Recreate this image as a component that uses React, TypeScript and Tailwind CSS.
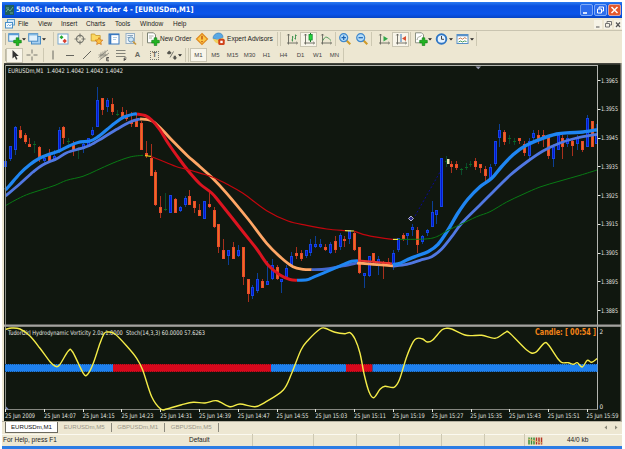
import type { ReactNode } from "react";
import clsx from "clsx";

type Point = [number, number];

// direction, high, body top, body bottom, low
type Candle = ["u" | "d" | "x", number, number, number, number];

const candles: Candle[] = [
  ["u", 158, 161, 167, 170],
  ["u", 146, 146, 159, 161],
  ["u", 126, 127, 150, 155],
  ["d", 126, 130, 138, 139],
  ["d", 133, 135, 142, 144],
  ["d", 138, 144, 147, 147],
  ["x", 141, 144, 145, 153],
  ["d", 146, 147, 158, 162],
  ["u", 157, 158, 161, 164],
  ["d", 149, 154, 162, 162],
  ["u", 150, 156, 161, 161],
  ["u", 127, 130, 152, 153],
  ["d", 126, 127, 138, 144],
  ["x", 138, 141, 142, 146],
  ["d", 141, 144, 151, 156],
  ["x", 147, 149, 150, 159],
  ["u", 141, 144, 149, 153],
  ["u", 138, 138, 147, 147],
  ["u", 127, 130, 135, 136],
  ["u", 87, 100, 127, 127],
  ["d", 98, 98, 110, 115],
  ["u", 98, 100, 107, 112],
  ["d", 98, 104, 112, 115],
  ["x", 110, 114, 115, 116],
  ["d", 107, 112, 119, 119],
  ["d", 110, 115, 119, 121],
  ["d", 112, 121, 124, 127],
  ["d", 115, 121, 127, 127],
  ["d", 121, 123, 150, 150],
  ["d", 141, 153, 156, 158],
  ["d", 144, 158, 176, 176],
  ["d", 170, 172, 205, 206],
  ["d", 196, 207, 213, 218],
  ["x", 193, 209, 210, 211],
  ["u", 195, 195, 213, 213],
  ["d", 198, 199, 213, 213],
  ["u", 206, 207, 211, 212],
  ["u", 196, 198, 205, 207],
  ["d", 190, 196, 205, 205],
  ["d", 201, 201, 208, 213],
  ["d", 204, 210, 216, 216],
  ["u", 201, 201, 219, 219],
  ["d", 192, 204, 207, 208],
  ["d", 207, 210, 227, 228],
  ["d", 224, 224, 247, 253],
  ["d", 239, 250, 259, 259],
  ["u", 250, 250, 256, 265],
  ["d", 242, 247, 259, 259],
  ["u", 245, 250, 256, 257],
  ["d", 247, 247, 277, 285],
  ["d", 279, 279, 294, 302],
  ["u", 285, 287, 296, 299],
  ["u", 273, 279, 291, 293],
  ["d", 279, 281, 288, 288],
  ["u", 261, 281, 285, 285],
  ["u", 259, 265, 279, 280],
  ["d", 265, 267, 279, 280],
  ["u", 279, 279, 282, 293],
  ["u", 265, 268, 277, 279],
  ["u", 252, 256, 265, 267],
  ["d", 247, 253, 256, 259],
  ["d", 250, 253, 259, 261],
  ["u", 250, 250, 256, 258],
  ["u", 239, 244, 253, 256],
  ["u", 236, 244, 247, 248],
  ["u", 239, 244, 247, 248],
  ["d", 244, 247, 250, 251],
  ["u", 242, 244, 253, 254],
  ["d", 236, 241, 250, 253],
  ["u", 233, 235, 247, 250],
  ["d", 236, 239, 241, 247],
  ["u", 230, 230, 239, 244],
  ["d", 231, 233, 250, 251],
  ["d", 247, 247, 273, 274],
  ["u", 273, 273, 276, 288],
  ["u", 256, 256, 276, 277],
  ["d", 253, 253, 261, 265],
  ["u", 256, 259, 265, 275],
  ["d", 261, 262, 266, 279],
  ["d", 258, 262, 265, 266],
  ["u", 250, 253, 267, 270],
  ["u", 238, 238, 250, 252],
  ["d", 233, 235, 239, 241],
  ["u", 233, 233, 236, 245],
  ["u", 224, 227, 230, 236],
  ["d", 227, 230, 245, 253],
  ["u", 235, 236, 242, 244],
  ["u", 229, 230, 233, 236],
  ["u", 201, 212, 227, 227],
  ["u", 210, 210, 215, 224],
  ["u", 158, 158, 207, 207],
  ["x", 156, 161, 162, 167],
  ["d", 161, 164, 167, 173],
  ["d", 161, 164, 168, 170],
  ["x", 168, 169, 170, 175],
  ["x", 163, 167, 168, 170],
  ["x", 161, 164, 165, 167],
  ["d", 158, 161, 167, 170],
  ["d", 164, 164, 168, 173],
  ["d", 166, 169, 176, 181],
  ["u", 164, 167, 178, 179],
  ["u", 141, 141, 164, 166],
  ["u", 124, 130, 138, 147],
  ["d", 130, 132, 142, 145],
  ["x", 135, 138, 139, 144],
  ["x", 138, 141, 142, 145],
  ["d", 138, 138, 141, 144],
  ["d", 141, 144, 153, 156],
  ["u", 138, 141, 156, 159],
  ["u", 130, 133, 138, 141],
  ["d", 130, 135, 139, 144],
  ["d", 130, 135, 139, 147],
  ["d", 135, 135, 156, 159],
  ["u", 144, 147, 159, 167],
  ["u", 135, 135, 150, 150],
  ["d", 135, 138, 147, 159],
  ["u", 135, 138, 144, 147],
  ["d", 138, 141, 146, 156],
  ["u", 135, 138, 144, 150],
  ["d", 141, 141, 150, 152],
  ["u", 115, 118, 147, 147],
  ["d", 121, 121, 147, 147],
  ["u", 124, 135, 144, 144],
];

const averages: { color: string; width: number; points: Point[] }[] = [
  // slow
  { color: "#5078e2", width: 2.8, points: [[5.5, 196], [20, 183.7], [33, 172], [43, 164.7], [56.7, 158.7], [66.7, 152.7], [80, 148.7], [90, 145.3], [103, 137.7], [116.7, 129.3], [130, 122], [140, 119]] },
  { color: "#ffa766", width: 2.8, points: [[140, 119], [151.7, 120.7], [161.7, 129.3], [173, 141.3], [186.7, 155], [200, 166.7], [211.7, 177.3], [226.7, 193.3], [248, 219], [266.7, 243.3], [281.7, 258.3], [293, 266.7], [303, 269.3], [311.7, 269.7]] },
  { color: "#4568cf", width: 2.8, points: [[311.7, 269.7], [326.7, 269], [343, 266], [357, 263]] },
  { color: "#ffa766", width: 2.8, points: [[357, 263], [373, 264.3], [393, 265.8]] },
  { color: "#5078e2", width: 2.8, points: [[393, 266], [406.7, 264.3], [420, 260.3], [431.7, 256.7], [441.7, 249], [451.7, 236.7], [461.7, 223.3], [480, 205], [493, 192], [510, 175.3], [526.7, 162], [543, 151], [560, 143], [576.7, 138], [597, 134.3]] },
  // fast
  { color: "#1f86f2", width: 3.2, points: [[5.5, 190], [10, 185], [20, 173.5], [30, 164.5], [40, 158], [50, 154], [59, 151], [68, 146.5], [78, 142.5], [90, 141], [97, 137.5], [107, 129.5], [115, 123], [123, 117.5], [133, 114.3], [137, 114]] },
  { color: "#dc1420", width: 3, points: [[137, 114], [145, 115.5], [151.7, 120], [160, 130], [168, 143], [180, 160], [190, 173], [200, 184], [211.7, 193], [220, 202.7], [243, 231.7], [256.7, 249], [268, 265], [280, 275], [290, 279.5], [297, 280.3]] },
  { color: "#1f86f2", width: 3, points: [[297, 280.3], [307, 279.8], [313, 277.3], [326.7, 271.7], [343, 264.7], [351.7, 261.3], [358, 260.8]] },
  { color: "#e83430", width: 2, points: [[358, 260.6], [373, 261.7], [392, 263.5]] },
  { color: "#1f86f2", width: 3.4, points: [[393, 264.5], [400, 263.3], [406.7, 260], [416.7, 256], [428, 251.7], [438, 244.3], [448, 230], [458, 213], [468, 199], [480, 186.7], [491.7, 178.3], [501.7, 166.5], [513, 154.7], [525, 146], [540, 139.3], [556.7, 134], [570, 132.7], [583, 132], [597, 129.7]] },
  // trend
  { color: "#087a14", width: 1, points: [[5.5, 205.7], [15, 200.3], [26.7, 194.7], [41.7, 189.7], [55, 185.3], [66.7, 180.3], [83, 176.3], [96.7, 170.3], [113, 163], [130, 157], [143, 155.3]] },
  { color: "#e8d81c", width: 1.2, points: [[145, 155.6], [151, 156.4]] },
  { color: "#c4060e", width: 1.2, points: [[151.7, 156.7], [166.7, 162.7], [176.7, 166.7], [193, 171], [211.7, 176.7], [226.7, 184], [243, 193.3], [266.7, 210.7], [288, 221], [306.7, 225.3], [326.7, 229], [345, 230.7]] },
  { color: "#f0e450", width: 1.2, points: [[345, 230.6], [354, 231]] },
  { color: "#c4060e", width: 1.2, points: [[354, 231], [363, 234.3], [380, 237.7], [393, 239.3]] },
  { color: "#f0e450", width: 1.2, points: [[393, 239.4], [398, 239.4]] },
  { color: "#087a14", width: 1, points: [[398, 239.4], [425, 239], [436.7, 236.7], [448, 230.3], [460, 224.7], [476.7, 216.7], [490, 211.7], [506.7, 202], [523, 194.3], [540, 187], [560, 181], [580, 175.3], [597, 170]] },
];

const stochastic: Point[] = [
  [5.7, 329.3], [11.7, 328], [20, 329], [30, 336], [40, 348.3], [50, 361.7], [55, 366], [59.3, 365.3], [68.3, 351],
  [72.7, 352], [83.3, 373.3], [87.7, 374.3], [93.3, 363.3], [100, 343.3], [104.3, 333.3], [108.3, 332], [115, 334],
  [126.7, 346], [136.7, 358.3], [142.7, 370], [151.7, 396.7], [160.7, 409], [166.7, 409], [181.7, 404.7],
  [193.3, 402.3], [205, 403], [216.7, 400.7], [230, 406.7], [240, 404], [255, 406.7], [265, 402.3], [283.3, 390],
  [291.7, 373.3], [301, 350], [308.3, 340], [320, 329], [325, 328.3], [335, 332.3], [345, 333.7], [350, 332.7],
  [355, 339], [360, 353.3], [364.3, 375], [369, 391.7], [373.7, 397.7], [380, 389.3], [385, 386.3], [394, 387.3],
  [399.3, 380], [406.7, 356.7], [413.3, 341.7], [417.3, 338.3], [422.7, 339], [427.3, 342], [432.7, 340],
  [441.7, 330], [446.7, 328.3], [451.7, 329], [466, 335.3], [481.7, 335.3], [495, 338.3], [505, 332.7],
  [509.3, 332.7], [526.7, 350], [535, 352.7], [544, 343.3], [548.3, 344.7], [558.3, 359.3], [562.3, 362.7],
  [568.3, 362.7], [573.3, 364.3], [577.3, 362.7], [582.3, 367], [587.3, 360.3], [591.7, 362.3], [597, 358.7],
];

const band = [
  { x: 5, width: 108, color: "#1e80ee" },
  { x: 113, width: 158, color: "#d8081c" },
  { x: 271, width: 75, color: "#1e80ee" },
  { x: 346, width: 26.5, color: "#d8081c" },
  { x: 372.5, width: 225, color: "#1e80ee" },
];

const times = ["2009", "14:07", "14:15", "14:23", "14:31", "14:39", "14:47", "14:55", "15:03", "15:11", "15:19", "15:27", "15:35", "15:43", "15:51", "15:59"];
const prices = ["1.3965", "1.3955", "1.3945", "1.3935", "1.3925", "1.3915", "1.3905", "1.3895", "1.3885"];

const smooth = (pts: Point[]) => {
  let d = `M${pts[0][0]} ${pts[0][1]}`;
  for (let i = 0; i < pts.length - 1; i++) {
    const a = pts[Math.max(i - 1, 0)];
    const b = pts[i];
    const c = pts[i + 1];
    const e = pts[Math.min(i + 2, pts.length - 1)];
    d += `C${b[0] + (c[0] - a[0]) / 6} ${b[1] + (c[1] - a[1]) / 6} ${c[0] - (e[0] - b[0]) / 6} ${c[1] - (e[1] - b[1]) / 6} ${c[0]} ${c[1]}`;
  }
  return d;
};

const CandleShape = ({ candle, index }: { candle: Candle; index: number }) => {
  const [dir, high, top, bottom, low] = candle;
  const x = Math.round(5.2 + index * 4.846);
  const wick = dir === "u" ? "#0c3f96" : dir === "d" ? "#a8301c" : "#0a4a2c";
  return (
    <g>
      <rect x={x} y={high} width={1} height={Math.max(low - high, 1)} fill={wick} />
      {dir === "x" ? (
        <rect x={x - 1} y={top} width={3} height={1} fill="#0a6a20" />
      ) : (
        <>
          <rect x={x - 1} y={top} width={3} height={bottom - top} fill={dir === "u" ? "#1446e4" : "#ea4a2c"} />
          <rect x={x} y={top + 1} width={1} height={Math.max(bottom - top - 2, 0)} fill={dir === "u" ? "#0414d0" : "#e87020"} />
        </>
      )}
    </g>
  );
};

const Chart = () => (
  <svg width="618" height="358" viewBox="4 63 618 358" className="block" fontFamily="'DejaVu Sans Condensed', 'DejaVu Sans', sans-serif">
    <rect x="4" y="63" width="618" height="358" fill="#10170f" />
    <rect x="4" y="63" width="618" height="1.6" fill="#45463f" />
    <rect x="620.5" y="63" width="1.5" height="358" fill="#a8a698" />

    <g>
      {candles.map((c, i) => (
        <CandleShape key={i} candle={c} index={i} />
      ))}
    </g>
    {averages.map((line, i) => (
      <path key={i} d={smooth(line.points)} fill="none" stroke={line.color} strokeWidth={line.width} />
    ))}

    {/* order marks */}
    <path d="M415 216L440 172" stroke="#0a0a90" strokeWidth="1" strokeDasharray="2 2" />
    <path d="M411 216l2.5 2.5-2.5 2.5-2.5-2.5z" fill="#2a2a88" stroke="#c0c0e0" strokeWidth=".9" />
    <rect x="447" y="159" width="2.5" height="5" fill="#e8e4b0" />
    <path d="M475.5 66.5h5.5l-2.7 2.7z" fill="#9a9cb0" />

    <g fill="#b4b6b0">
      <rect x="5" y="65" width="593" height="1" />
      <rect x="5" y="65" width="1" height="344" fill="#8c8e88" />
      <rect x="597" y="65" width="1" height="344" />
      <rect x="5" y="409" width="593" height="1" fill="#858780" />
    </g>
    <rect x="4" y="324.5" width="617" height="2.3" fill="#a3a29f" />

    {band.map((b) => (
      <rect key={b.x} x={b.x} y="364" width={b.width} height="8" fill={b.color} />
    ))}
    <path d="M5 364.5H597M5 371.5H597" stroke="#10170f" strokeOpacity=".45" strokeWidth="1" strokeDasharray="1 1" />

    <g fill="#e6e8e0" fontSize="6.3">
      <text x="8" y="73" textLength="115" lengthAdjust="spacingAndGlyphs">EURUSDm,M1&#160; 1.4042 1.4042 1.4042 1.4042</text>
      <text x="8" y="334.5" textLength="197" lengthAdjust="spacingAndGlyphs">TudorGirl Hydrodynamic Vorticity 2.0a 1.0000&#160; Stoch(14,3,3) 60.0000 57.6263</text>
      {prices.map((p, i) => (
        <g key={p}>
          <rect x="598" y={Math.round(80 + i * 28.75)} width="2.5" height="1" />
          <text x="601" y={82.5 + i * 28.75} textLength="17" lengthAdjust="spacingAndGlyphs">{p}</text>
        </g>
      ))}
      <text x="599.5" y="333.5">2</text>
      <text x="599.5" y="408.5">0</text>
      {times.map((t, i) => (
        <g key={t}>
          <rect x={Math.round(5 + i * 38.8)} y="409" width="1" height="3" />
          <text x={i === 0 ? 5 : 5.2 + i * 38.75} y="417.8" textLength={i === 0 ? 30 : 32} lengthAdjust="spacingAndGlyphs">{`25 Jun ${t}`}</text>
        </g>
      ))}
    </g>

    <path d={smooth(stochastic)} fill="none" stroke="#f4ec48" strokeWidth="1.4" />
    <path d="M6 406.5l3 3H6z" fill="#8090c0" />
    <text x="535" y="335.3" fontSize="8" fontWeight="bold" fill="#f48418" textLength="61" lengthAdjust="spacingAndGlyphs">Candle: [ 00:54 ]</text>
  </svg>
);

const Icon = ({ children, className }: { children: ReactNode; className?: string }) => (
  <svg width="14" height="14" viewBox="0 0 14 14" fill="none" className={clsx("shrink-0", className)}>
    {children}
  </svg>
);

const Slot = ({ children, pressed }: { children: ReactNode; pressed?: boolean }) => (
  <div className={clsx("flex h-[15px] w-[17px] shrink-0 items-center justify-center", pressed && "border border-[#c9c5b2] bg-[#f8f5ea]")}>
    {children}
  </div>
);

const Caret = () => (
  <svg width="4" height="3" viewBox="0 0 4 3" className="shrink-0">
    <path d="M0 .3h4L2 2.6z" fill="#222" />
  </svg>
);

const DropDown = ({ children }: { children: ReactNode }) => (
  <div className="flex h-[15px] w-[18px] shrink-0 items-center">{children}<Caret /></div>
);

const Divider = () => <div className="h-[14px] w-px shrink-0 bg-[#cdc8b2]" />;

const Plus = () => <path d="M8.2 5.8h2.6v2.5h2.5v2.6h-2.5v2.6H8.2v-2.6H5.7V8.3h2.5z" fill="#22b422" stroke="#0b7a12" strokeWidth=".6" />;

const Axes = () => <path d="M3.5 2v10.5M2 11h10.5M2.4 3.4L3.5 2l1.1 1.4M11.3 9.9l1.2 1.1-1.2 1.1" stroke="#68685f" strokeWidth=".9" />;

const Magnifier = ({ plus }: { plus?: boolean }) => (
  <Icon>
    <path d="M8.5 8.5l3.8 3.8" stroke="#d09a28" strokeWidth="2" />
    <circle cx="5.7" cy="5.7" r="4" fill="#b4dcf8" stroke="#4088cc" strokeWidth="1.2" />
    <path d={plus ? "M3.5 5.7h4.4M5.7 3.5v4.4" : "M3.5 5.7h4.4"} stroke="#1c64b4" strokeWidth="1.2" />
  </Icon>
);

const TitleBar = () => (
  <div className="flex h-4 items-center bg-[linear-gradient(#2a7bf2_0%,#0a50e0_25%,#0a54ea_75%,#0644c4_100%)] pr-px pl-[3px]">
    <svg width="9" height="10" viewBox="0 0 9 10" className="mr-[2px] shrink-0">
      <rect width="9" height="10" fill="#20605c" />
      <path d="M1 7l2-3 2 2 3-4M1 3h3M5 8h3" stroke="#68a898" fill="none" />
    </svg>
    <div className="w-[182px] font-['DejaVu_Sans_Condensed','DejaVu_Sans',sans-serif] text-[7.5px] leading-none font-bold whitespace-nowrap text-white">
      58005: Interbank FX Trader 4 - [EURUSDm,M1]
    </div>
    <div className="ml-auto flex gap-px">
      <svg width="13" height="12" viewBox="0 0 13 12">
        <rect x=".5" y=".5" width="12" height="11" rx="1.5" fill="#2c6cec" stroke="#a8c8fc" strokeWidth=".7" />
        <path d="M3 9h4" stroke="#fff" strokeWidth="1.6" />
      </svg>
      <svg width="13" height="12" viewBox="0 0 13 12">
        <rect x=".5" y=".5" width="12" height="11" rx="1.5" fill="#2c6cec" stroke="#a8c8fc" strokeWidth=".7" />
        <path d="M5 4.5V3h4.5v4H8M3.5 5h4v4h-4z" stroke="#fff" fill="none" />
      </svg>
      <svg width="13" height="12" viewBox="0 0 13 12">
        <rect x=".5" y=".5" width="12" height="11" rx="1.5" fill="#e4572c" stroke="#fcc8b8" strokeWidth=".7" />
        <path d="M3.5 3l6 6M9.5 3l-6 6" stroke="#fff" strokeWidth="1.5" />
      </svg>
    </div>
  </div>
);

const MenuBar = () => (
  <div className="flex h-[13px] items-center border-b border-[#c9c4b0] pl-[3px] text-[6.5px] leading-none text-[#222]">
    <svg width="10" height="10" viewBox="0 0 10 10" className="mr-[3px]">
      <rect x="2.5" y=".5" width="7" height="5.5" fill="#d4e8f8" stroke="#5a9ccc" />
      <rect x=".5" y="3.5" width="7" height="5.5" fill="#f4faff" stroke="#4a90c8" />
      <path d="M2 7l1.5-1.5L5 7l1.5-2" stroke="#4a90c8" fill="none" strokeWidth=".7" />
    </svg>
    <span className="w-5">File</span>
    <span className="w-[23px]">View</span>
    <span className="w-[25px]">Insert</span>
    <span className="w-[29px]">Charts</span>
    <span className="w-[25px]">Tools</span>
    <span className="w-[33px]">Window</span>
    <span>Help</span>
    <svg width="28" height="9" viewBox="0 0 28 9" className="ml-auto" fill="none">
      <path d="M0 0h8v9H0zM10 0h8v9h-8zM20 0h8v9h-8z" fill="#f6f3e6" />
      <path d="M2 7h3.5M22 2.5l4 4.5M26 2.5l-4 4.5" stroke="#555" strokeWidth="1.2" />
      <path d="M13 3V1.5h4.5V5H16M11.5 3.5h4V7h-4z" stroke="#666" strokeWidth=".9" />
    </svg>
  </div>
);

const StandardToolbar = () => (
  <div className="flex h-4 items-center pl-[3px] leading-none text-[#222]">
    <div className="mr-[2px] h-3 w-px shrink-0 bg-[#bdb8a4]" />
    <DropDown>
      <Icon>
        <rect x=".7" y="1.7" width="10" height="7.5" fill="#e8f4ff" stroke="#4a8cc4" />
        <path d="M1 2.5h9.5" stroke="#5a9cd8" strokeWidth="1.5" />
        <Plus />
      </Icon>
    </DropDown>
    <div className="w-[2px]" />
    <DropDown>
      <Icon>
        <rect x="3.5" y="4.5" width="9" height="7.5" fill="#a8d0f0" stroke="#4a8cc4" />
        <rect x=".7" y="1.7" width="9" height="7.5" fill="#e0f0fc" stroke="#4a8cc4" />
        <path d="M1 2.7h8.5" stroke="#80b8e4" strokeWidth="1.5" />
      </Icon>
    </DropDown>
    <div className="w-[7px]" />
    <Divider />
    <Slot>
      <Icon>
        <rect x="2" y="2" width="10" height="10" fill="#fff" stroke="#78a8d0" />
        <path d="M5.5 3.2l2 2-2 2-2-2z" fill="#22a830" />
        <path d="M8.700 6.800l2.200 2.200-2.200 2.200L6.500 9z" fill="#d84030" />
      </Icon>
    </Slot>
    <Slot>
      <Icon>
        <circle cx="7" cy="7" r="3.6" stroke="#77776e" strokeWidth="1.1" />
        <path d="M7 1.500v4M7 8.500v4M1.500 7h4M8.500 7h4" stroke="#77776e" strokeWidth="1.1" />
      </Icon>
    </Slot>
    <Slot>
      <Icon>
        <path d="M1.200 9V2h3.500l1 1.500h4.500V9z" fill="#fcd860" stroke="#c89828" strokeWidth=".8" />
        <path d="M9 5.500l1.200 2.400 2.600.3-2 1.800.5 2.500L9 11.300l-2.300 1.200.5-2.500-2-1.800 2.600-.3z" fill="#fcc040" stroke="#d07820" strokeWidth=".8" />
      </Icon>
    </Slot>
    <Slot>
      <Icon>
        <rect x="2" y="2" width="10" height="10" fill="#fff" stroke="#3878c0" />
        <path d="M3.300 2v10" stroke="#3878c0" strokeWidth="2" />
        <path d="M2 2.500h10" stroke="#3878c0" strokeWidth="1.3" />
        <path d="M6 5.500h4M6 7.500h3" stroke="#9cc0e0" strokeWidth=".8" />
      </Icon>
    </Slot>
    <Slot>
      <Icon>
        <rect x="2" y="1.500" width="8.500" height="10" fill="#eef4f8" stroke="#98b0c4" />
        <path d="M3.500 3.500H9M3.500 5.500h3" stroke="#8aa4bc" />
        <circle cx="7" cy="7.500" r="2.600" fill="#cce4f4" stroke="#6c98bc" />
        <path d="M9 9.500l3 3" stroke="#c89840" strokeWidth="1.700" />
      </Icon>
    </Slot>
    <div className="w-[3px]" />
    <Divider />
    <div className="w-[3px]" />
    <Icon>
      <path d="M1.500.8h6l2 2v8h-8z" fill="#fff" stroke="#707868" strokeWidth=".9" />
      <path d="M3 4h4.500M3 6h3" stroke="#9aa090" strokeWidth=".8" />
      <Plus />
    </Icon>
    <span className="w-[35px] shrink-0 text-[6.500px] whitespace-nowrap">New Order</span>
    <Icon>
      <path d="M7 1.500L12.500 7 7 12.500 1.500 7z" fill="#fcc848" stroke="#e08a20" strokeWidth="1.200" />
      <path d="M7 3.800v3.700M7 9v1.300" stroke="#c05010" strokeWidth="1.400" />
    </Icon>
    <Icon className="ml-[3px]">
      <path d="M1 6.500C1 3.500 3.500 1 6.500 1S11 3 11 5.500L6.500 8z" fill="#58a8e4" stroke="#3c80bc" strokeWidth=".7" />
      <path d="M.8 6.500c3 1.800 6 1.200 10.200-1l.5 2.500-4.500 3.500c-3 0-5-2-6.200-5z" fill="#f0d060" />
      <rect x="6.300" y="6.800" width="6.400" height="6.200" rx="1.500" fill="#d04018" />
      <rect x="8.300" y="8.700" width="2.400" height="2.400" fill="#fff" />
    </Icon>
    <span className="ml-px w-[50px] shrink-0 text-[6.600px] whitespace-nowrap">Expert Advisors</span>
    <Divider />
    <div className="w-[2px]" />
    <Divider />
    <div className="w-[2px]" />
    <Slot>
      <Icon>
        <Axes />
        <path d="M7.500 4v5.500M6.500 8h1M7.500 5h1M10.500 2.500v5M9.500 6.500h1M10.500 3.500h1.200" stroke="#389048" strokeWidth=".9" />
      </Icon>
    </Slot>
    <Slot pressed>
      <Icon>
        <Axes />
        <path d="M8.500 1v9" stroke="#187828" />
        <rect x="7" y="2.500" width="3.200" height="5.500" fill="#24d83c" stroke="#188830" strokeWidth=".8" />
      </Icon>
    </Slot>
    <Slot>
      <Icon>
        <Axes />
        <path d="M4 8.500C6 4 7.500 4 12 8.500" stroke="#58a060" />
      </Icon>
    </Slot>
    <div className="w-px" />
    <Divider />
    <Slot>
      <Magnifier plus />
    </Slot>
    <Slot>
      <Magnifier />
    </Slot>
    <div className="w-[1px]" />
    <Divider />
    <div className="w-[3px]" />
    <Slot>
      <Icon>
        <Axes />
        <path d="M6.500 4l4.500 2.700-4.500 2.700z" fill="#30a848" />
      </Icon>
    </Slot>
    <Slot pressed>
      <Icon>
        <Axes />
        <path d="M7 2v8" stroke="#3878b8" />
        <path d="M12 4L8 6.500 12 9z" fill="#d85030" />
      </Icon>
    </Slot>
    <div className="w-px" />
    <Divider />
    <div className="w-[3px]" />
    <DropDown>
      <Icon>
        <path d="M1.500.8h6l2 2v8h-8z" fill="#fff" stroke="#808878" strokeWidth=".9" />
        <path d="M3 8c1.500-5 2-2 4.500-4.500" stroke="#909888" strokeWidth=".9" />
        <Plus />
      </Icon>
    </DropDown>
    <div className="w-[3px]" />
    <DropDown>
      <Icon>
        <circle cx="6.500" cy="7" r="4.800" fill="#e4f2ff" stroke="#2f76c4" strokeWidth="1.900" />
        <path d="M6.500 4v3.300H9" stroke="#444" />
      </Icon>
    </DropDown>
    <div className="w-[3px]" />
    <DropDown>
      <Icon>
        <rect x="1" y="2.500" width="11" height="9" fill="#fff" stroke="#5890c8" />
        <path d="M1 3.300h11" stroke="#5890c8" strokeWidth="2" />
        <path d="M2.500 7l2-1 2 1.200 2-1.500 2 .8" stroke="#c07040" strokeWidth=".9" />
        <path d="M2.500 10l2-1 2 1 2-1 2 .5" stroke="#389048" strokeWidth=".9" />
      </Icon>
    </DropDown>
    <div className="w-[2px]" />
    <Divider />
  </div>
);

const LineToolbar = () => (
  <div className="flex h-4 items-center pl-[3px] text-[6px] leading-none text-[#444]">
    <div className="h-3 w-px bg-[#bdb8a4]" />
    <Slot pressed>
      <Icon>
        <path d="M4.500 2v8.500l2.100-2 1.500 3.300 1.400-.7-1.500-3.100h2.800z" fill="#333" />
      </Icon>
    </Slot>
    <Slot>
      <Icon>
        <path d="M7 1.500v4M7 8.500v4M1.500 7h4M8.500 7h4" stroke="#77776e" />
      </Icon>
    </Slot>
    <div className="w-[3px]" />
    <Divider />
    <Slot>
      <Icon>
        <path d="M7 2.500v9" stroke="#66665e" />
      </Icon>
    </Slot>
    <Slot>
      <Icon>
        <path d="M3 7.500h8" stroke="#66665e" />
      </Icon>
    </Slot>
    <Slot>
      <Icon>
        <path d="M3 11l8-8" stroke="#66665e" />
      </Icon>
    </Slot>
    <Slot>
      <Icon>
        <path d="M1.500 9.500L11 2M2.500 12L12 5M4 4.500v6M6 3.500v6M8 2.500v6M1.500 7h9" stroke="#77776e" strokeWidth=".7" />
        <path d="M12 9.500H9.700v3.300H12M9.700 11h2" stroke="#333" strokeWidth=".8" />
      </Icon>
    </Slot>
    <Slot>
      <Icon>
        <path d="M2 2.500h9.500M2 5.500h9.500M2 8.500h9.500" stroke="#77776e" strokeWidth=".9" />
        <path d="M12.500 10h-2.300v3M10.200 11.500h1.900" stroke="#333" strokeWidth=".8" />
      </Icon>
    </Slot>
    <Slot>
      <span className="text-[7.5px] font-bold text-[#66665e]">A</span>
    </Slot>
    <Slot>
      <span className="flex h-[9px] w-[9px] items-center justify-center border border-dotted border-[#77776e] text-[7.5px] font-bold text-[#66665e]">T</span>
    </Slot>
    <Slot>
      <Icon>
        <path d="M4.200 2.500l2.300 2.300-1.300 1.400H3L1.800 5z" fill="#55554e" />
        <path d="M8.700 7.800h2.200v1.700h1.300L10 12 7.500 9.500h1.200z" fill="#55554e" />
        <path d="M8.500 3.500l-3.500 6" stroke="#77776e" />
      </Icon>
    </Slot>
    <div className="-ml-[2px]">
      <Caret />
    </div>
    <div className="w-[3px]" />
    <Divider />
    <div className="w-[2px]" />
    <Divider />
    <div className="ml-[1px] flex h-[14px] w-[17px] items-center justify-center border border-[#c9c5b2] bg-[#f8f5ea]">M1</div>
    {["M5", "M15", "M30", "H1", "H4", "D1", "W1", "MN"].map((period) => (
      <span key={period} className="w-[17px] shrink-0 text-center">
        {period}
      </span>
    ))}
    <Divider />
  </div>
);

const ChartTabs = () => (
  <div className="flex h-[13px] items-start border-t border-[#b6b2a2] text-[6.1px] leading-none text-[#9a9788]">
    <div className="ml-[3px] flex h-[11px] w-[53px] items-center justify-center border border-t-0 border-[#6c6a60] bg-white text-[#111]">EURUSDm,M1</div>
    {["EURUSDm,M5", "GBPUSDm,M1", "GBPUSDm,M5"].map((tab) => (
      <div key={tab} className="mt-px flex h-[9px] w-[53.5px] items-center justify-center border-r border-[#8c8a7e]">
        {tab}
      </div>
    ))}
    <svg width="16" height="7" viewBox="0 0 16 7" className="mt-[2px] mr-[3px] ml-auto">
      <path d="M4 1.5v4L1.500 3.500zM12 1.500v4l2.500-2z" fill="#8a8878" />
    </svg>
  </div>
);

const StatusBar = () => (
  <div className="flex h-3 items-center border-t border-[#fbf9f0] pl-px text-[6.5px] leading-none text-[#222]">
    <span className="w-[182px]">For Help, press F1</span>
    <span className="w-[67px] pl-[4px]">Default</span>
    <Divider />
    <div className="w-[60px]" />
    <Divider />
    <div className="w-[42px]" />
    <Divider />
    <div className="w-[42px]" />
    <Divider />
    <div className="w-[41px]" />
    <Divider />
    <div className="w-[42px]" />
    <Divider />
    <div className="w-[39px]" />
    <Divider />
    <svg width="15" height="8" viewBox="0 0 15 8" className="ml-[3px]">
      <path d="M1 .5v7M3.500.5v7M6 .5v7" stroke="#3c8c34" strokeWidth="1.500" />
      <path d="M8.500.5v7M11 .5v7M13.500.5v7" stroke="#b43422" strokeWidth="1.500" />
      <path d="M0 2l14 4" stroke="#e0c070" />
    </svg>
    <span className="ml-[24px]">44/0 kb</span>
  </div>
);

const App = () => {
  return (
    <div className="h-[449px] w-[625px] overflow-hidden bg-white pt-[2px] pl-[2px] font-['Liberation_Sans',Arial,sans-serif]">
      <div className="flex h-[447px] w-[620px] flex-col bg-[#ede7d2]">
        <TitleBar />
        <MenuBar />
        <StandardToolbar />
        <LineToolbar />
        <div className="h-[358px] pl-[2px]">
          <Chart />
        </div>
        <ChartTabs />
        <StatusBar />
        <div className="h-[3px] bg-[#2c7ce4]" />
      </div>
    </div>
  );
};

export default App;
